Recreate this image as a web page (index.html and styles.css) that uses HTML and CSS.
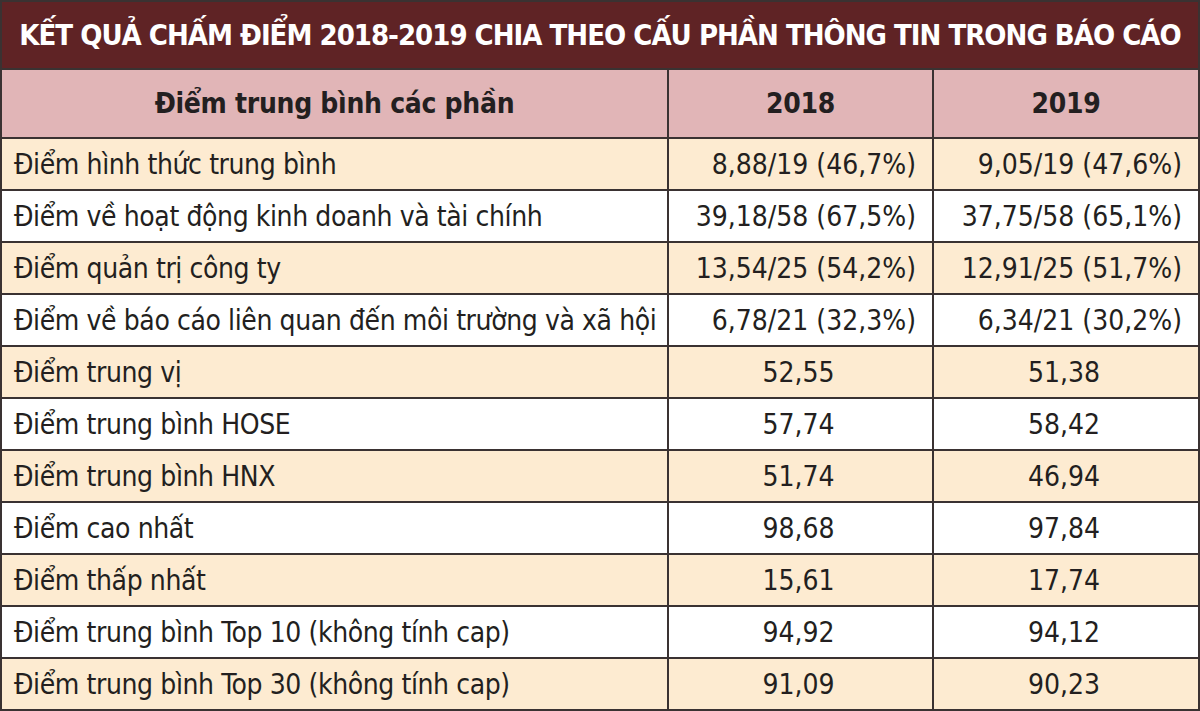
FILE: index.html
```html
<!DOCTYPE html>
<html lang="vi">
<head>
<meta charset="utf-8">
<link rel="stylesheet" href="styles.css">
</head>
<body>
<div class="sheet">
  <div class="title">KẾT QUẢ CHẤM ĐIỂM 2018-2019 CHIA THEO CẤU PHẦN THÔNG TIN TRONG BÁO CÁO</div>
  <table class="grid">
    <colgroup><col class="c1"><col class="c2"><col class="c3"></colgroup>
    <thead>
      <tr class="head"><th>Điểm trung bình các phần</th><th>2018</th><th>2019</th></tr>
    </thead>
    <tbody>
      <tr class="alt"><td>Điểm hình thức trung bình</td><td class="r">8,88/19 (46,7%)</td><td class="r">9,05/19 (47,6%)</td></tr>
      <tr><td>Điểm về hoạt động kinh doanh và tài chính</td><td class="r">39,18/58 (67,5%)</td><td class="r">37,75/58 (65,1%)</td></tr>
      <tr class="alt"><td>Điểm quản trị công ty</td><td class="r">13,54/25 (54,2%)</td><td class="r">12,91/25 (51,7%)</td></tr>
      <tr><td>Điểm về báo cáo liên quan đến môi trường và xã hội</td><td class="r">6,78/21 (32,3%)</td><td class="r">6,34/21 (30,2%)</td></tr>
      <tr class="alt"><td>Điểm trung vị</td><td class="c">52,55</td><td class="c">51,38</td></tr>
      <tr><td>Điểm trung bình HOSE</td><td class="c">57,74</td><td class="c">58,42</td></tr>
      <tr class="alt"><td>Điểm trung bình HNX</td><td class="c">51,74</td><td class="c">46,94</td></tr>
      <tr><td>Điểm cao nhất</td><td class="c">98,68</td><td class="c">97,84</td></tr>
      <tr class="alt"><td>Điểm thấp nhất</td><td class="c">15,61</td><td class="c">17,74</td></tr>
      <tr><td>Điểm trung bình Top 10 (không tính cap)</td><td class="c">94,92</td><td class="c">94,12</td></tr>
      <tr class="alt"><td>Điểm trung bình Top 30 (không tính cap)</td><td class="c">91,09</td><td class="c">90,23</td></tr>
    </tbody>
  </table>
</div>
</body>
</html>
```

FILE: styles.css
```css
html, body {
  margin: 0;
  padding: 0;
  background: #ffffff;
}

.sheet {
  width: 1200px;
  height: 711px;
  box-sizing: border-box;
  border: 2px solid #3a3232;
  font-family: "DejaVu Sans Condensed", "Liberation Sans", sans-serif;
  color: #231f20;
  overflow: hidden;
}

.title {
  height: 66px;
  background: #5f2325;
  color: #ffffff;
  font-weight: bold;
  font-size: 29px;
  letter-spacing: -1px;
  line-height: 66px;
  text-align: center;
  white-space: nowrap;
  border-bottom: 2px solid #3a3232;
}

.grid {
  width: 100%;
  border-collapse: collapse;
  table-layout: fixed;
}

.c1 { width: 666px; }
.c2 { width: 265px; }
.c3 { width: auto; }

.grid th,
.grid td {
  border: 2px solid #3a3232;
  height: 50px;
  padding: 0 16px 0 12px;
  font-size: 28px;
  letter-spacing: -0.4px;
  white-space: nowrap;
  vertical-align: middle;
}

.grid tr:first-child th { border-top: none; }
.grid th:first-child, .grid td:first-child { border-left: none; }
.grid th:last-child, .grid td:last-child { border-right: none; }
.grid tbody tr:last-child td { border-bottom: none; }

.head th {
  background: #e1b5b7;
  height: 67px;
  padding: 0 12px;
  font-size: 28px;
  letter-spacing: -0.3px;
  font-weight: bold;
  text-align: center;
}

.alt td { background: #fdebd1; }

.r { text-align: right; }
.c { text-align: center; }
.grid td.r, .grid td.c { letter-spacing: 0; }
```
